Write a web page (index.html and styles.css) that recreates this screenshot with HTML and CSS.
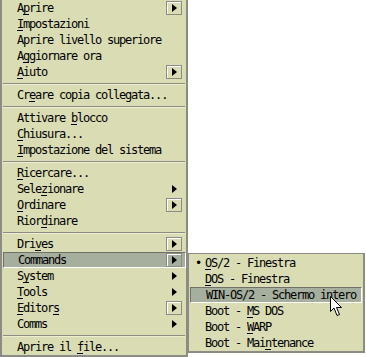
FILE: index.html
```html
<html>
<head>
	<title>Menu</title>
	<link rel="stylesheet" href="styles.css">
</head>
<body>
	<div class="menu main">
		<div class="item"><span class="label">A<u>p</u>rire</span><span class="cascade"><i class="tri"></i></span></div>
		<div class="item"><span class="label"><u>I</u>mpostazioni</span></div>
		<div class="item"><span class="label">Aprire livello superiore</span></div>
		<div class="item"><span class="label">A<u>g</u>giornare ora</span></div>
		<div class="item"><span class="label"><u>A</u>iuto</span><span class="cascade"><i class="tri"></i></span></div>
		<div class="sep"></div>
		<div class="item"><span class="label">Cr<u>e</u>are copia collegata...</span></div>
		<div class="sep"></div>
		<div class="item"><span class="label">Attivare <u>b</u>locco</span></div>
		<div class="item"><span class="label"><u>C</u>hiusura...</span></div>
		<div class="item"><span class="label"><u>I</u>mpostazione del sistema</span></div>
		<div class="sep"></div>
		<div class="item"><span class="label"><u>R</u>icercare...</span></div>
		<div class="item"><span class="label">Sele<u>z</u>ionare</span><span class="arrow"><i class="tri"></i></span></div>
		<div class="item"><span class="label"><u>O</u>rdinare</span><span class="cascade"><i class="tri"></i></span></div>
		<div class="item"><span class="label">Rior<u>d</u>inare</span></div>
		<div class="sep"></div>
		<div class="item"><span class="label">Dri<u>v</u>es</span><span class="cascade"><i class="tri"></i></span></div>
		<div class="item selected"><span class="label">Commands</span><span class="cascade"><i class="tri"></i></span></div>
		<div class="item"><span class="label">S<u>y</u>stem</span><span class="arrow"><i class="tri"></i></span></div>
		<div class="item"><span class="label"><u>T</u>ools</span><span class="arrow"><i class="tri"></i></span></div>
		<div class="item"><span class="label"><u>E</u>ditor<u>s</u></span><span class="cascade"><i class="tri"></i></span></div>
		<div class="item"><span class="label">Comms</span><span class="arrow"><i class="tri"></i></span></div>
		<div class="sep"></div>
		<div class="item"><span class="label">Aprire il <u>f</u>ile...</span></div>
	</div>

	<div class="menu sub">
		<div class="item"><span class="check">&bull;</span><span class="label"><u>O</u>S/2 - Finestra</span></div>
		<div class="item"><span class="label"><u>D</u>OS - Finestra</span></div>
		<div class="item selected"><span class="label">WIN-OS/2 - Schermo intero</span></div>
		<div class="item"><span class="label">Boot - <u>M</u>S DOS</span></div>
		<div class="item"><span class="label">Boot - <u>W</u>ARP</span></div>
		<div class="item"><span class="label">Boot - Mai<u>n</u>tenance</span></div>
	</div>

	<!-- mouse pointer -->
	<svg class="pointer" width="14" height="22" viewBox="0 0 14 22">
		<path d="M0.5 0.5 L0.5 15.5 L4 12 L7 19.5 L9.5 18.5 L6.5 11.5 L11.5 11.5 Z" fill="#fff" stroke="#000" stroke-width="1"/>
	</svg>
</body>
</html>
```
FILE: styles.css
```css
body {
    margin: 0;
    background-color: #fff;
    font-family: "DejaVu Sans Mono", monospace;
    font-size: 12px;
    letter-spacing: -1.22px;
    color: #000;
}

.menu {
    background-color: #dadcb4;
    box-sizing: border-box;
}

.main {
    width: 188px;
    height: 357px;
    border-left: 2px solid #8c8c84;
    border-right: 2px solid #8c8c84;
    border-bottom: 2px solid #8c8c84;
}

.item {
    height: 16px;
    display: flex;
    align-items: center;
    box-sizing: border-box;
    padding-left: 15px;
    padding-right: 2px;
    position: relative;
}

.label {
    flex: 1;
    white-space: pre;
    line-height: 16px;
}

u {
    text-decoration: none;
    border-bottom: 1px solid #000;
    padding-bottom: 0px;
    display: inline-block;
    line-height: 12px;
    margin-bottom: -1px;
}

.selected {
    background-color: #a6ae9e;
    border-top: 1px solid #707068;
    border-left: 1px solid #707068;
    border-bottom: 1px solid #fff;
    border-right: 1px solid #fff;
    margin: 0 0 0 1px;
    padding-left: 14px;
}

.sep {
    height: 7px;
    display: flex;
    align-items: center;
    padding: 0 1px;
}

.sep::before {
    content: "";
    flex: 1;
    height: 1px;
    background-color: #8c8c84;
    border-bottom: 1px solid #eceed0;
}

.cascade {
    width: 16px;
    height: 14px;
    box-sizing: border-box;
    border: 1px solid #8c8c84;
    box-shadow: inset 1px 1px 0 #fff;
    display: flex;
    align-items: center;
    justify-content: center;
    margin-right: 2px;
}

.arrow {
    width: 16px;
    height: 14px;
    display: flex;
    align-items: center;
    justify-content: center;
    margin-right: 2px;
}

.tri {
    width: 0;
    height: 0;
    border-top: 4px solid transparent;
    border-bottom: 4px solid transparent;
    border-left: 5px solid #000;
    margin-left: 1px;
}

.selected .cascade {
    margin-right: 1px;
}

.sub {
    position: absolute;
    left: 187px;
    top: 253px;
    width: 178px;
    border: 2px solid #8c8c84;
    border-top-width: 1px;
    padding-top: 1px;
}

.sub .item {
    padding-left: 16px;
}

.sub .selected {
    margin: 0 1px;
    padding-left: 15px;
}

.check {
    position: absolute;
    left: 6px;
    top: 0;
    line-height: 16px;
}

.pointer {
    position: absolute;
    left: 330px;
    top: 296px;
}
```
